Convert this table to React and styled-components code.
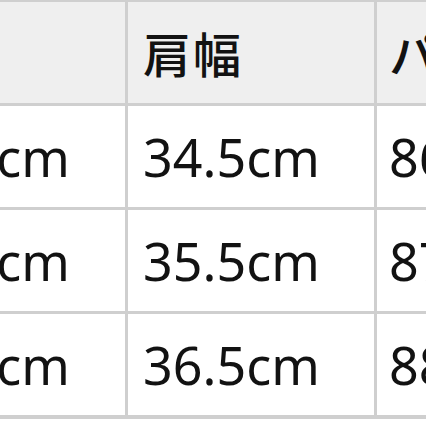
import React from 'react'
import styled, { createGlobalStyle } from 'styled-components'

const GlobalStyle = createGlobalStyle`
    html, body {
        margin: 0;
        padding: 0;
        background: #ffffff;
        overflow: hidden;
    }
`

const headers = ['着丈', '肩幅', 'パンツ丈']

const rows = [
    ['65.5cm', '34.5cm', '86cm'],
    ['66.5cm', '35.5cm', '87cm'],
    ['67.5cm', '36.5cm', '88cm'],
]

// padding per column, the table is cropped on both sides
const pads = [14, 15, 12]

function App() {
    return (
        <>
            <GlobalStyle />
            <Table>
                {headers.map((h, j) => (
                    <HeadCell key={h} pad={pads[j]}>{h}</HeadCell>
                ))}
                {rows.map((r, i) => r.map((v, j) => (
                    <Cell key={i + '-' + j} pad={pads[j]}>{v}</Cell>
                )))}
            </Table>
        </>
    )
}

export default App

const Table = styled.div`
    display: grid;
    grid-template-columns: repeat(3, 246px);
    grid-template-rows: repeat(4, 101px);
    gap: 3px;
    width: max-content;
    margin-left: -121px;
    padding: 2px 0 4px 0;
    background: #cfcfcf;
`

const Cell = styled.div`
    display: flex;
    align-items: center;
    padding-left: ${props => props.pad}px;
    background: #ffffff;
    color: #121212;
    font-family: "Noto Sans", "Noto Sans CJK JP", sans-serif;
    font-size: 52px;
    white-space: nowrap;
    overflow: hidden;
`

const HeadCell = styled(Cell)`
    padding-bottom: 2px;
    background: #efefef;
    font-family: "Noto Sans CJK JP", sans-serif;
    font-size: 48px;
    font-weight: 500;
    letter-spacing: 2px;
`
